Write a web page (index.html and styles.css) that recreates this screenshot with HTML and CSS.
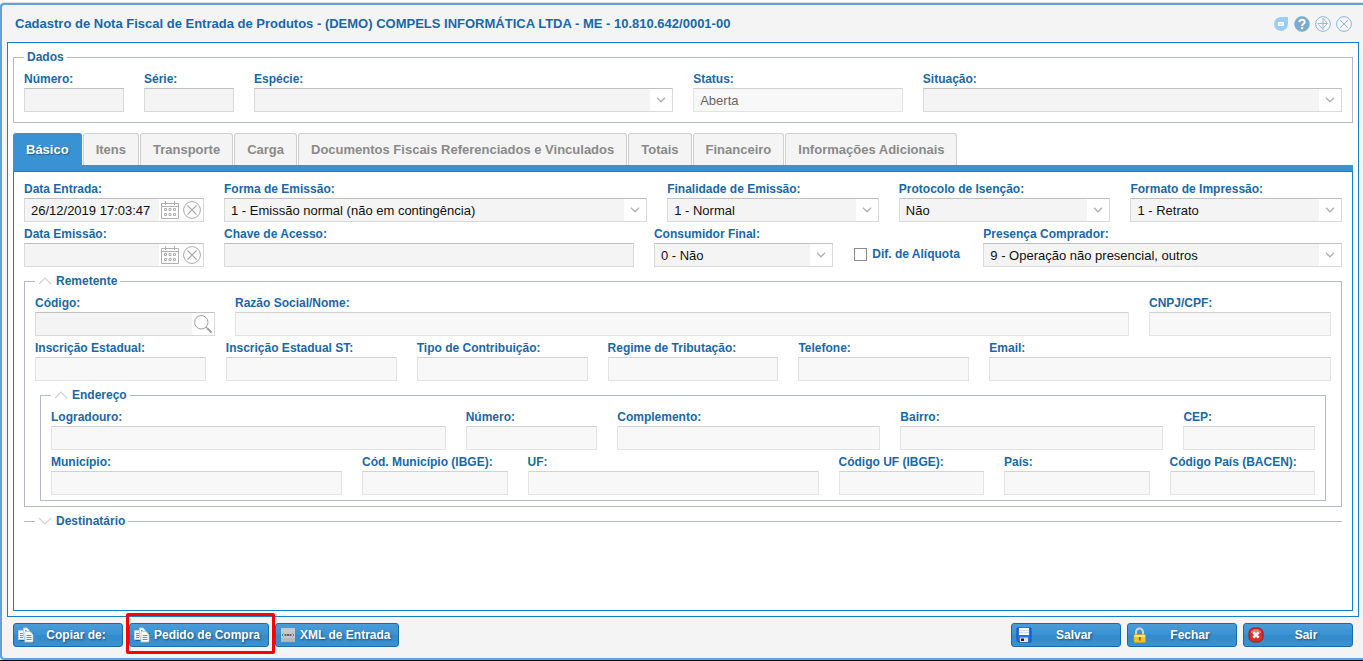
FILE: index.html
```html
<!DOCTYPE html>
<html lang="pt-BR">
<head>
  <meta charset="UTF-8">
  <title>Cadastro de Nota Fiscal de Entrada de Produtos</title>
  <link rel="stylesheet" href="styles.css">
</head>
<body>

  <!-- Ícones reutilizados -->
  <svg class="sprite" aria-hidden="true">
    <symbol id="seta" viewBox="0 0 10 6"><path d="M1 .8 5 4.8 9 .8" fill="none" stroke="#b0b0b0" stroke-width="1.3"/></symbol>
    <symbol id="abre" viewBox="0 0 14 8"><path d="M1 1 7 7 13 1" fill="none" stroke="#d3d3d3" stroke-width="1.2"/></symbol>
    <symbol id="fecha" viewBox="0 0 14 8"><path d="M1 7 7 1 13 7" fill="none" stroke="#d3d3d3" stroke-width="1.2"/></symbol>
    <symbol id="calendario" viewBox="0 0 18 18">
      <path d="M.5 2.5h17v15H.5zM.5 5.5h17M4.5 0v4M13.5 0v4" fill="none" stroke="#b0b0b0"/>
      <path d="M3.5 7.5h2v2h-2zM8 7.5h2v2H8zM12.5 7.5h2v2h-2zM3.5 12.5h2v2h-2zM8 12.5h2v2H8zM12.5 12.5h2v2h-2z" fill="none" stroke="#b0b0b0"/>
    </symbol>
    <symbol id="limpar" viewBox="0 0 18 18"><circle cx="9" cy="9" r="8.4" fill="none" stroke="#a9a9a9"/><path d="M4.5 4.5l9 9M13.5 4.5l-9 9" stroke="#a9a9a9" stroke-width="1.1"/></symbol>
    <symbol id="copiar" viewBox="0 0 16 16">
      <path d="M1.500 5h5v9h-5z" fill="#1f5f94"/>
      <path d="M.5 3.500h6v9h-6z" fill="#fff" stroke="#b9d3e8"/>
      <path d="M5.500 1h3.500l2 2v7H5.500z" fill="#fff" stroke="#b9d3e8"/>
      <path d="M8 6h8v10H8z" fill="#1f5f94"/>
      <path d="M7 4.500h5l3 3v7.500H7z" fill="#fff" stroke="#b9d3e8"/>
      <path d="M2 6.500h3M2 8.500h3M2 10.500h3M7 3.500h1.500M8.500 8.500h5M8.500 10.500h5M8.500 12.500h5" stroke="#5b93c2"/>
    </symbol>
  </svg>

  <div class="janela">

    <header class="titulo">
      <h1>Cadastro de Nota Fiscal de Entrada de Produtos - (DEMO) COMPELS INFORMÁTICA LTDA - ME - 10.810.642/0001-00</h1>
      <div class="ferramentas">
        <button type="button" aria-label="Chat">
          <svg width="16" height="16" viewBox="0 0 16 16"><path d="M8 1h7v7A7 7 0 1 1 8 1z" fill="#9bcdf0"/><rect x="5" y="6" width="6" height="4" rx="1" fill="#fff"/><path d="M6 8h4" stroke="#c4e1f6"/></svg>
        </button>
        <button type="button" aria-label="Ajuda">
          <svg width="16" height="16" viewBox="0 0 16 16"><circle cx="8" cy="8" r="7.500" fill="#7eaacb" stroke="#69bdd6" stroke-width=".6"/><path d="M5.400 6.100C5.500 2.900 10.700 2.900 10.700 5.900 10.700 7.700 8.100 7.700 8.100 10" fill="none" stroke="#fff" stroke-width="2"/><path d="M7 11.200h2.200v2H7z" fill="#fff"/></svg>
        </button>
        <button type="button" aria-label="Restaurar">
          <svg width="16" height="16" viewBox="0 0 16 16" fill="none" stroke="#8fb8da"><circle cx="8" cy="8" r="7.400"/><path d="M8 8V2.500L12.500 7.500H2.500M8 8v5.500L3.500 8.500M12.500 7.500 8 12" stroke-width=".9"/></svg>
        </button>
        <button type="button" aria-label="Fechar janela">
          <svg width="16" height="16" viewBox="0 0 16 16" fill="none" stroke="#8fb8da"><circle cx="8" cy="8" r="7.400"/><path d="M4 4l8 8M12 4l-8 8"/></svg>
        </button>
      </div>
    </header>

    <main class="painel">

      <fieldset class="grupo dados">
        <legend>Dados</legend>
        <div class="linha linha-dados">
          <div class="campo"><label for="numero">Número:</label><input type="text" id="numero"></div>
          <div class="campo"><label for="serie">Série:</label><input type="text" id="serie"></div>
          <div class="campo"><label for="especie">Espécie:</label>
            <div class="combo"><select id="especie"><option></option></select><svg class="seta"><use href="#seta"/></svg></div>
          </div>
          <div class="campo"><label for="status">Status:</label><input type="text" id="status" value="Aberta" readonly></div>
          <div class="campo"><label for="situacao">Situação:</label>
            <div class="combo"><select id="situacao"><option></option></select><svg class="seta"><use href="#seta"/></svg></div>
          </div>
        </div>
      </fieldset>

      <nav class="abas">
        <button type="button" class="ativa">Básico</button>
        <button type="button">Itens</button>
        <button type="button">Transporte</button>
        <button type="button">Carga</button>
        <button type="button">Documentos Fiscais Referenciados e Vinculados</button>
        <button type="button">Totais</button>
        <button type="button">Financeiro</button>
        <button type="button">Informações Adicionais</button>
      </nav>

      <section class="conteudo">

        <div class="linha linha-emissao">
          <div class="campo"><label for="dataEntrada">Data Entrada:</label>
            <div class="combo data">
              <input type="text" id="dataEntrada" value="26/12/2019 17:03:47">
              <button type="button" aria-label="Abrir calendário"><svg><use href="#calendario"/></svg></button>
              <button type="button" aria-label="Limpar data"><svg><use href="#limpar"/></svg></button>
            </div>
          </div>
          <div class="campo"><label for="forma">Forma de Emissão:</label>
            <div class="combo"><select id="forma"><option>1 - Emissão normal (não em contingência)</option></select><svg class="seta"><use href="#seta"/></svg></div>
          </div>
          <div class="campo"><label for="finalidade">Finalidade de Emissão:</label>
            <div class="combo"><select id="finalidade"><option>1 - Normal</option></select><svg class="seta"><use href="#seta"/></svg></div>
          </div>
          <div class="campo"><label for="protocolo">Protocolo de Isenção:</label>
            <div class="combo"><select id="protocolo"><option>Não</option></select><svg class="seta"><use href="#seta"/></svg></div>
          </div>
          <div class="campo"><label for="formato">Formato de Impressão:</label>
            <div class="combo"><select id="formato"><option>1 - Retrato</option></select><svg class="seta"><use href="#seta"/></svg></div>
          </div>
        </div>

        <div class="linha linha-acesso">
          <div class="campo"><label for="dataEmissao">Data Emissão:</label>
            <div class="combo data">
              <input type="text" id="dataEmissao">
              <button type="button" aria-label="Abrir calendário"><svg><use href="#calendario"/></svg></button>
              <button type="button" aria-label="Limpar data"><svg><use href="#limpar"/></svg></button>
            </div>
          </div>
          <div class="campo"><label for="chave">Chave de Acesso:</label><input type="text" id="chave"></div>
          <div class="campo"><label for="consumidor">Consumidor Final:</label>
            <div class="combo"><select id="consumidor"><option>0 - Não</option></select><svg class="seta"><use href="#seta"/></svg></div>
          </div>
          <div class="marcar"><input type="checkbox" id="aliquota"><label for="aliquota">Dif. de Alíquota</label></div>
          <div class="campo"><label for="presenca">Presença Comprador:</label>
            <div class="combo"><select id="presenca"><option>9 - Operação não presencial, outros</option></select><svg class="seta"><use href="#seta"/></svg></div>
          </div>
        </div>

        <fieldset class="grupo">
          <legend><button type="button"><svg><use href="#fecha"/></svg>Remetente</button></legend>
          <div class="linha linha-codigo">
            <div class="campo"><label for="codigo">Código:</label>
              <div class="combo busca">
                <input type="text" id="codigo">
                <button type="button" aria-label="Pesquisar"><svg viewBox="0 0 18 18" fill="none" stroke="#a0a0a0"><circle cx="7.300" cy="7.300" r="6.700"/><path d="M12 12l1 1" /><path d="M13 13l4.500 4.500" stroke-width="2"/></svg></button>
              </div>
            </div>
            <div class="campo"><label for="razao">Razão Social/Nome:</label><input type="text" id="razao" readonly></div>
            <div class="campo"><label for="cnpj">CNPJ/CPF:</label><input type="text" id="cnpj" readonly></div>
          </div>
          <div class="linha linha-inscricao">
            <div class="campo"><label for="ie">Inscrição Estadual:</label><input type="text" id="ie" readonly></div>
            <div class="campo"><label for="iest">Inscrição Estadual ST:</label><input type="text" id="iest" readonly></div>
            <div class="campo"><label for="contribuicao">Tipo de Contribuição:</label><input type="text" id="contribuicao" readonly></div>
            <div class="campo"><label for="regime">Regime de Tributação:</label><input type="text" id="regime" readonly></div>
            <div class="campo"><label for="telefone">Telefone:</label><input type="text" id="telefone" readonly></div>
            <div class="campo"><label for="email">Email:</label><input type="text" id="email" readonly></div>
          </div>

          <fieldset class="grupo endereco">
            <legend><button type="button"><svg><use href="#fecha"/></svg>Endereço</button></legend>
            <div class="linha linha-logradouro">
              <div class="campo"><label for="logradouro">Logradouro:</label><input type="text" id="logradouro" readonly></div>
              <div class="campo"><label for="endNumero">Número:</label><input type="text" id="endNumero" readonly></div>
              <div class="campo"><label for="complemento">Complemento:</label><input type="text" id="complemento" readonly></div>
              <div class="campo"><label for="bairro">Bairro:</label><input type="text" id="bairro" readonly></div>
              <div class="campo"><label for="cep">CEP:</label><input type="text" id="cep" readonly></div>
            </div>
            <div class="linha linha-municipio">
              <div class="campo"><label for="municipio">Município:</label><input type="text" id="municipio" readonly></div>
              <div class="campo"><label for="codMunicipio">Cód. Município (IBGE):</label><input type="text" id="codMunicipio" readonly></div>
              <div class="campo"><label for="uf">UF:</label><input type="text" id="uf" readonly></div>
              <div class="campo"><label for="codUf">Código UF (IBGE):</label><input type="text" id="codUf" readonly></div>
              <div class="campo"><label for="pais">País:</label><input type="text" id="pais" readonly></div>
              <div class="campo"><label for="codPais">Código País (BACEN):</label><input type="text" id="codPais" readonly></div>
            </div>
          </fieldset>
        </fieldset>

        <fieldset class="grupo recolhido">
          <legend><button type="button"><svg><use href="#abre"/></svg>Destinatário</button></legend>
        </fieldset>

      </section>
    </main>

    <footer class="rodape">
      <button type="button" class="botao largo"><svg viewBox="0 0 16 16"><use href="#copiar"/></svg><span>Copiar de:</span></button>
      <div class="destaque">
        <button type="button" class="botao"><svg viewBox="0 0 16 16"><use href="#copiar"/></svg><span>Pedido de Compra</span></button>
      </div>
      <button type="button" class="botao">
        <svg viewBox="0 0 16 16"><rect x="1" y="1" width="14" height="14" fill="#c6c9cb"/><path d="M1 11h14v4H1z" fill="#b4b8ba"/><path d="M3.500 6.500 2 8l1.500 1.500M12.500 6.500 14 8l-1.500 1.500" fill="none" stroke="#3c8fca"/><path d="M4.500 8h7" stroke="#705c55" stroke-width="2" stroke-dasharray="2 .5"/></svg>
        <span>XML de Entrada</span>
      </button>
      <div class="espaco"></div>
      <button type="button" class="botao largo">
        <svg viewBox="0 0 16 16"><path d="M1 1h14v14H2.500L1 13.500z" fill="#2b6fe0" stroke="#174fae"/><path d="M3 1h10v7H3z" fill="#fff"/><path d="M3 3.500h10M3 5.500h10" stroke="#d5dce4"/><path d="M4 10.500h8V15H4z" fill="#dfe5ec"/><path d="M5 11.500h3V14H5z" fill="#222"/></svg>
        <span>Salvar</span>
      </button>
      <button type="button" class="botao largo">
        <svg viewBox="0 0 16 16"><path d="M4 8V5a3.500 3.500 0 0 1 7 0v3" fill="none" stroke="#d2d6d8" stroke-width="2"/><rect x="2" y="7.500" width="11.500" height="8" rx="1" fill="#f8c322" stroke="#d89a10" stroke-width=".6"/><path d="M2.500 8h10.500v2H2.500z" fill="#ffe680"/><path d="M7.800 10v3.500" stroke="#8b5b07" stroke-width="1.800"/></svg>
        <span>Fechar</span>
      </button>
      <button type="button" class="botao largo">
        <svg viewBox="0 0 16 16"><rect x="1" y="1" width="14" height="14" rx="5" fill="#d9302c" stroke="#a31716"/><path d="M3 6c0-5 10-5 10 0z" fill="#f07a70"/><path d="M5.300 5.300l5.400 5.400M10.700 5.300l-5.400 5.400" stroke="#fff" stroke-width="2.600"/></svg>
        <span>Sair</span>
      </button>
    </footer>

  </div>

</body>
</html>
```
FILE: styles.css
```css
* {
  box-sizing: border-box;
}

body {
  margin: 0;
  min-height: 100vh;
  display: flex;
  flex-direction: column;
  background: #fff;
  border-top: 2px solid #fbfbfb;
  border-bottom: 1px solid #0c0c0e;
  font-family: "Liberation Sans", Arial, sans-serif;
  font-size: 12px;
  color: #1968a6;
}

button, input, select {
  font-family: inherit;
  margin: 0;
}

button {
  padding: 0;
  border: none;
  background: none;
  cursor: pointer;
}

svg {
  display: block;
  flex: none;
}

.sprite {
  position: absolute;
  width: 0;
  height: 0;
}

.janela {
  flex: 1;
  display: flex;
  flex-direction: column;
  margin-top: 1px;
  padding: 0 4px 0 5px;
  background: #f4f4f4;
  border: 2px solid #5fa2dd;
  border-right: none;
  border-radius: 4px 0 0 4px;
  box-shadow: 0 -1px 0 #ddd;
}

/* Barra de título */
.titulo {
  display: flex;
  align-items: center;
  justify-content: space-between;
  height: 37px;
  padding: 1px 7px 0 8px;
}

.titulo h1 {
  margin: 0;
  font-size: 13px;
  line-height: 16px;
}

.ferramentas {
  display: flex;
  gap: 5px;
}

/* Painel principal */
.painel {
  flex: 1;
  display: flex;
  flex-direction: column;
  padding: 5px;
  background: #fff;
  border: 1px solid #157fcc;
}

.grupo {
  min-width: 0;
  margin: 0 0 5px;
  padding: 5px 10px 0;
  border: 1px solid #b5b8c8;
}

.grupo legend {
  padding: 0 3px;
  height: 19px;
  font-size: 12px;
  font-weight: bold;
  line-height: 19px;
}

.grupo legend button {
  display: flex;
  align-items: center;
  gap: 4px;
  height: 18px;
  font-size: 12px;
  font-weight: bold;
  color: inherit;
}

.grupo legend svg {
  width: 14px;
  height: 8px;
}

.dados {
  margin-bottom: 10px;
  padding-bottom: 5px;
}

.endereco {
  margin: 0 5px 5px;
}

.recolhido {
  padding: 0 11px;
  border-width: 1px 0 0;
}

/* Linhas do formulário */
.linha {
  display: grid;
  column-gap: 20px;
  margin-bottom: 5px;
}

.linha-dados { grid-template-columns: 100px 90px 2fr 1fr 2fr; }
.linha-emissao { grid-template-columns: 180px 2fr 1fr 1fr 1fr; }
.linha-acesso { grid-template-columns: 180px 16fr 7fr 110px 14fr; }
.linha-codigo { grid-template-columns: 180px 1fr 182px; }
.linha-inscricao { grid-template-columns: repeat(5, 1fr) 2fr; }
.linha-logradouro { grid-template-columns: 3fr 1fr 2fr 2fr 1fr; }
.linha-municipio { grid-template-columns: 2fr 1fr 2fr 1fr 1fr 1fr; }

.campo {
  min-width: 0;
}

label {
  display: block;
  height: 16px;
  font-weight: bold;
  line-height: 14px;
  white-space: nowrap;
}

.campo > input, .combo {
  width: 100%;
  height: 24px;
  background: #f4f4f4;
  border: 1px solid #d9d9d9;
  border-top-color: #c0c0c0;
}

.campo > input {
  display: block;
  padding: 0 6px;
  font-size: 13px;
  color: #222;
}

.campo > input[readonly] {
  background: #f8f8f8;
  border-color: #d2d2d2 #e3e3e3 #e3e3e3;
  color: #666;
}

.combo {
  display: flex;
  position: relative;
}

.combo select, .combo input {
  flex: 1;
  min-width: 0;
  height: 22px;
  padding: 0 6px;
  border: none;
  border-radius: 0;
  background: none;
  font-size: 13px;
  color: #111;
  appearance: none;
}

.combo select {
  padding-right: 26px;
}

.seta {
  position: absolute;
  top: 0;
  right: 0;
  width: 22px;
  height: 22px;
  padding: 8px 6px;
  background: #fff;
  pointer-events: none;
}

.combo button {
  width: 22px;
  height: 22px;
  padding: 2px;
  background: #fff;
}

.combo button svg {
  width: 18px;
  height: 18px;
}

.marcar {
  display: flex;
  align-items: center;
  gap: 5px;
  padding: 15px 0 0 1px;
}

.marcar input {
  width: 13px;
  height: 13px;
  border: 1px solid #8c8c8c;
  background: #fff;
  appearance: none;
}

.marcar input:checked {
  background: #3892d3;
}

/* Abas */
.abas {
  display: flex;
  gap: 1px;
  border-bottom: 6px solid #3892d3;
}

.abas button {
  height: 32px;
  padding: 0 12px;
  background: #f4f4f4;
  border: 1px solid #d0d0d0;
  border-bottom: none;
  border-radius: 3px 3px 0 0;
  font-size: 13px;
  font-weight: bold;
  color: #8a8a8a;
  white-space: nowrap;
}

.abas .ativa {
  background: #3892d3;
  border-color: #3892d3;
  color: #fff;
  text-shadow: 1px 1px 1px #20608f;
}

.conteudo {
  flex: 1;
  padding: 10px 10px 0;
  border: 1px solid #157fcc;
}

/* Rodapé */
.rodape {
  display: flex;
  gap: 6px;
  padding: 6px 6px 11px;
}

.espaco {
  flex: 1;
}

.botao {
  display: flex;
  align-items: center;
  gap: 4px;
  height: 24px;
  padding: 0 8px 0 4px;
  background: linear-gradient(#4b9cd7, #3892d3 50%, #358ac8 51%, #3892d3);
  border: 1px solid #126daf;
  border-radius: 3px;
  font-size: 12px;
  font-weight: bold;
  color: #fff;
  text-shadow: 1px 1px 2px #1c4f78;
  white-space: nowrap;
}

.botao:hover {
  background: #3285c2;
}

.botao svg {
  width: 16px;
  height: 16px;
}

.largo {
  width: 110px;
}

.largo span {
  flex: 1;
  text-align: center;
}

.destaque {
  position: relative;
}

.destaque::after {
  content: "";
  position: absolute;
  inset: -10px -6px -7px -3px;
  border: 3px solid #fe0000;
  border-radius: 2px;
  pointer-events: none;
}
```
